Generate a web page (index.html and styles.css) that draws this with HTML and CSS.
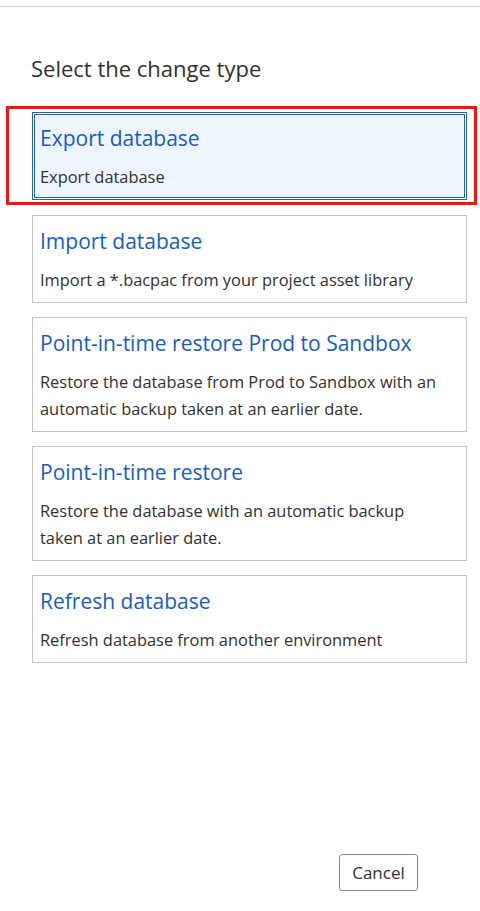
FILE: index.html
```html
<!DOCTYPE html>
<html lang="en">
<head>
<meta charset="utf-8">
<title>Select the change type</title>
<link rel="stylesheet" href="styles.css">
</head>
<body>
<div class="panel">
  <div class="topline"></div>
  <h2 class="heading">Select the change type</h2>
  <div class="options">
    <div class="option selected">
      <div class="option-title">Export database</div>
      <div class="option-desc">Export database</div>
    </div>
    <div class="option">
      <div class="option-title">Import database</div>
      <div class="option-desc">Import a *.bacpac from your project asset library</div>
    </div>
    <div class="option">
      <div class="option-title">Point-in-time restore Prod to Sandbox</div>
      <div class="option-desc">Restore the database from Prod to Sandbox with an automatic backup taken at an earlier date.</div>
    </div>
    <div class="option">
      <div class="option-title">Point-in-time restore</div>
      <div class="option-desc">Restore the database with an automatic backup taken at an earlier date.</div>
    </div>
    <div class="option">
      <div class="option-title">Refresh database</div>
      <div class="option-desc">Refresh database from another environment</div>
    </div>
  </div>
  <div class="footer">
    <button class="btn">Cancel</button>
  </div>
</div>
</body>
</html>
```
FILE: styles.css
```css
* { box-sizing: border-box; }
html, body { margin: 0; padding: 0; background: #ffffff; }
body {
  font-family: "Open Sans", "Noto Sans", "Liberation Sans", sans-serif;
  color: #323130;
}
.panel {
  height: 911px;
  display: flex;
  flex-direction: column;
  padding-top: 6px;
}
.topline {
  height: 1px;
  background: #d6d6d6;
}
.heading {
  margin: 45px 0 0 31px;
  font-size: 22px;
  font-weight: 400;
  line-height: 32px;
  color: #323130;
}
.options {
  display: flex;
  flex-direction: column;
  gap: 14px;
  margin: 28px 13px 0 32px;
}
.option {
  position: relative;
  border: 1px solid #c4c4c4;
  padding: 10px 16px 9px 7px;
  background: #fff;
}
.option.selected {
  background: #eef5fc;
  border-color: #2463ad;
  box-shadow: inset 0 0 0 1px #ffffff, inset 0 0 0 2px #2463ad;
  margin-bottom: 1px;
}
.option.selected::after {
  content: "";
  position: absolute;
  left: -27px;
  right: -11px;
  top: -7px;
  bottom: -6px;
  border: 3px solid #ff1010;
  pointer-events: none;
}
.option-title {
  font-size: 21px;
  line-height: 30px;
  color: #175cc4;
}
.option-desc {
  margin-top: 10px;
  font-size: 16.4px;
  line-height: 27px;
  color: #323130;
}
.footer {
  margin-top: auto;
  padding: 0 62px 20px 0;
  display: flex;
  justify-content: flex-end;
}
.btn {
  font-family: inherit;
  font-size: 17px;
  color: #323130;
  background: #fff;
  border: 1px solid #8a8886;
  border-radius: 3px;
  width: 79px;
  height: 37px;
  padding: 0;
}
```
